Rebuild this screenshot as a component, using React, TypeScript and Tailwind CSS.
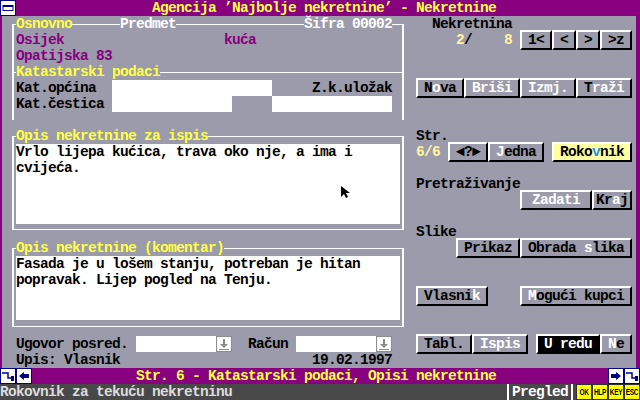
import React from "react";

const font = "font-['Liberation_Mono','DejaVu_Sans_Mono',monospace] font-bold text-[14.5px] tracking-[-0.7px] leading-4";

type BtnProps = { className?: string; children: React.ReactNode };

// 3D text-mode button: white top/left edge, black bottom/right shadow
const Btn = ({ className = "", children }: BtnProps) => (
  <div
    className={`-mt-[2px] flex h-5 items-center justify-center whitespace-pre border-2 border-t-white border-l-white border-r-black border-b-black text-black ${className}`}
  >
    {children}
  </div>
);

const Hot = ({ children }: { children: React.ReactNode }) => <span className="text-white">{children}</span>;

const Drop = () => (
  <div className="flex h-4 w-[96px] justify-end bg-white">
    <svg width="16" height="16" viewBox="0 0 16 16">
      <rect x="0.5" y="0.5" width="15" height="15" fill="white" stroke="#8c8c8c" />
      <path d="M7 3h2v5h3l-4 4-4-4h3z" fill="#8c8c8c" />
      <rect x="3" y="13" width="10" height="1" fill="#8c8c8c" />
    </svg>
  </div>
);

const WinIcon = () => (
  <svg width="16" height="16" viewBox="0 0 16 16">
    <rect x="0.5" y="0.5" width="15" height="15" fill="white" stroke="#000080" />
    <rect x="3" y="5.5" width="10" height="5" fill="none" stroke="#000080" />
    <rect x="3" y="5" width="10" height="2" fill="#000080" />
  </svg>
);

const StepIcon = () => (
  <svg width="16" height="16" viewBox="0 0 16 16">
    <rect x="0.5" y="0.5" width="15" height="15" fill="white" stroke="#000080" />
    <polyline points="2,5 8,5 8,10 13,10" fill="none" stroke="#000080" strokeWidth="1.5" />
    <rect x="11" y="8" width="3" height="5" fill="#000080" />
  </svg>
);

const ArrowIcon = ({ left }: { left?: boolean }) => (
  <svg width="16" height="16" viewBox="0 0 16 16">
    <rect x="0.5" y="0.5" width="15" height="15" fill="white" stroke="#000080" />
    {left ? (
      <>
        <polygon points="3,8 8,4 8,12" fill="#000080" />
        <rect x="8" y="6" width="5" height="4" fill="#000080" />
      </>
    ) : (
      <>
        <rect x="3" y="6" width="5" height="4" fill="#000080" />
        <polygon points="13,8 8,4 8,12" fill="#000080" />
      </>
    )}
  </svg>
);

const KeyIcon = ({ label }: { label: string }) => (
  <div className="flex h-4 w-4 items-center justify-center overflow-hidden border border-[#303030] bg-[#ffff00] font-['Liberation_Sans',sans-serif] text-[6.5px] font-bold leading-none tracking-[-0.3px] text-black">
    <span className="scale-y-150">{label}</span>
  </div>
);

export default function App() {
  return (
    <div className={`relative h-[400px] w-[640px] overflow-hidden bg-[#9b9bab] ${font}`}>
      {/* title bar */}
      <div className="flex h-4 bg-[#880080]">
        <WinIcon />
        <span className="pl-[136px] text-[#ffff40]">Agencija ’Najbolje nekretnine’ - Nekretnine</span>
      </div>

      <div className="flex h-[352px]">
        <div className="w-[2px] bg-[#880080]" />

        {/* left column */}
        <div className="w-[414px] pl-[10px] text-black">
          <div className="mt-2 h-[96px] w-[392px] border-x-2 border-t border-white">
            <div className="-mt-[9px] flex h-4">
              <span className="ml-[2px] bg-[#9b9bab] text-[#ffff40]">Osnovno</span>
              <span className="ml-[48px] bg-[#9b9bab] text-white">Predmet</span>
              <span className="ml-[128px] bg-[#9b9bab] text-white">Šifra 00002</span>
            </div>
            <div className="flex h-4 pl-[2px] text-[#880080]">
              <span className="w-[208px]">Osijek</span>
              <span>kuća</span>
            </div>
            <div className="h-4 pl-[2px] text-[#880080]">Opatijska 83</div>
            <div className="flex h-4 items-center">
              <div className="h-px w-[2px] bg-white" />
              <span className="text-[#ffff40]">Katastarski podaci</span>
              <div className="h-px flex-1 bg-white" />
            </div>
            <div className="flex h-4 pl-[2px]">
              <span className="w-[96px]">Kat.općina</span>
              <div className="w-[160px] bg-white" />
              <span className="ml-[40px]">Z.k.uložak</span>
            </div>
            <div className="flex h-4 pl-[2px]">
              <span className="w-[96px]">Kat.čestica</span>
              <div className="w-[120px] bg-white" />
              <div className="ml-[40px] w-[120px] bg-white" />
            </div>
          </div>

          <div className="mt-4 w-[392px] border-x-2 border-y border-white">
            <div className="-mt-[9px] flex h-4">
              <span className="ml-[2px] bg-[#9b9bab] text-[#ffff40]">Opis nekretnine za ispis</span>
            </div>
            <div className="mx-[2px] h-[80px] bg-white">
              <div>Vrlo lijepa kućica, trava oko nje, a ima i</div>
              <div>cvijeća.</div>
            </div>
            <div className="h-[5px]" />
          </div>

          <div className="mt-[18px] w-[392px] border-x-2 border-y border-white">
            <div className="-mt-[9px] flex h-4">
              <span className="ml-[2px] bg-[#9b9bab] text-[#ffff40]">Opis nekretnine (komentar)</span>
            </div>
            <div className="mx-[2px] h-[64px] bg-white">
              <div>Fasada je u lošem stanju, potreban je hitan</div>
              <div>popravak. Lijep pogled na Tenju.</div>
            </div>
            <div className="h-[6px]" />
          </div>

          <div className="mt-[9px] flex h-4 pl-1">
            <span className="w-[120px]">Ugovor posred.</span>
            <Drop />
            <span className="ml-4 w-[48px]">Račun</span>
            <Drop />
          </div>
          <div className="flex h-4 pl-1">
            <span className="w-[296px]">Upis: Vlasnik</span>
            <span>19.02.1997</span>
          </div>
        </div>

        {/* right column */}
        <div className="flex w-[216px] flex-col text-black">
          <div className="h-4 pl-4">Nekretnina</div>
          <div className="flex h-4 items-start">
            <span className="ml-[40px] text-[#fff4a0]">2</span>
            <span>/</span>
            <span className="ml-[32px] text-[#fff4a0]">8</span>
            <Btn className="ml-2 w-[32px]">1&lt;</Btn>
            <Btn className="w-[24px]">&lt;</Btn>
            <Btn className="w-[24px]">&gt;</Btn>
            <Btn className="w-[32px]">&gt;z</Btn>
          </div>

          <div className="mt-8 flex h-4 items-start">
            <Btn className="w-[48px]">
              N<Hot>o</Hot>va
            </Btn>
            <Btn className="w-[56px]">
              <Hot>Briši</Hot>
            </Btn>
            <Btn className="w-[56px]">
              <Hot>Izmj.</Hot>
            </Btn>
            <Btn className="w-[56px]">
              T<Hot>raži</Hot>
            </Btn>
          </div>

          <div className="mt-8 h-4">Str.</div>
          <div className="flex h-4 items-start">
            <span className="w-[32px] text-[#fff4a0]">6/6</span>
            <Btn className="w-[40px]">◄?►</Btn>
            <Btn className="w-[56px]">
              <Hot>J</Hot>edna
            </Btn>
            <Btn className="ml-2 w-[80px] bg-[#ffffa0]">
              Roko<span className="text-[#1e90ff]">v</span>nik
            </Btn>
          </div>

          <div className="mt-4 h-4">Pretraživanje</div>
          <div className="flex h-4 items-start justify-end">
            <Btn className="w-[72px]">
              <Hot>Zadati</Hot>
            </Btn>
            <Btn className="w-[40px]">
              Kr<Hot>a</Hot>j
            </Btn>
          </div>

          <div className="mt-4 h-4">Slike</div>
          <div className="flex h-4 items-start justify-end">
            <Btn className="w-[64px]">Prikaz</Btn>
            <Btn className="w-[112px]">
              Obrada <Hot>s</Hot>lika
            </Btn>
          </div>

          <div className="mt-8 flex h-4 items-start">
            <Btn className="w-[72px]">
              Vlasni<Hot>k</Hot>
            </Btn>
            <Btn className="ml-auto w-[112px]">
              <Hot>M</Hot>ogući kupci
            </Btn>
          </div>

          <div className="mt-8 flex h-4 items-start">
            <Btn className="w-[56px]">Tabl.</Btn>
            <Btn className="w-[56px]">
              <Hot>Ispis</Hot>
            </Btn>
            <Btn className="ml-2 w-[64px] bg-black text-white">U redu</Btn>
            <Btn className="w-[32px]">
              <Hot>N</Hot>e
            </Btn>
          </div>
        </div>

        <div className="w-[4px]" />
        <div className="w-[4px] bg-[#880080]" />
      </div>

      {/* status line */}
      <div className="flex h-4 bg-[#880080]">
        <StepIcon />
        <ArrowIcon left />
        <span className="ml-[104px] text-[#ffff40]">Str. 6 - Katastarski podaci, Opisi nekretnine</span>
        <div className="ml-auto flex">
          <ArrowIcon />
          <StepIcon />
        </div>
      </div>

      {/* hint line */}
      <div className="flex h-4 bg-[#484848]">
        <span className="text-[#dcdcdc]">Rokovnik za tekuću nekretninu</span>
        <div className="ml-auto flex">
          <div className="w-[2px] bg-white" />
          <span className="mx-[3px] w-[56px] text-white">Pregled</span>
          <div className="w-[2px] bg-white" />
          <div className="w-[3px]" />
          <KeyIcon label="OK" />
          <KeyIcon label="HLP" />
          <KeyIcon label="KEY" />
          <KeyIcon label="ESC" />
        </div>
      </div>

      {/* mouse pointer */}
      <svg className="absolute left-[341px] top-[186px]" width="10" height="13" viewBox="0 0 10 13">
        <path d="M0 0V11L3 8L5 12L7 11L5 7H9Z" fill="black" />
      </svg>
    </div>
  );
}
